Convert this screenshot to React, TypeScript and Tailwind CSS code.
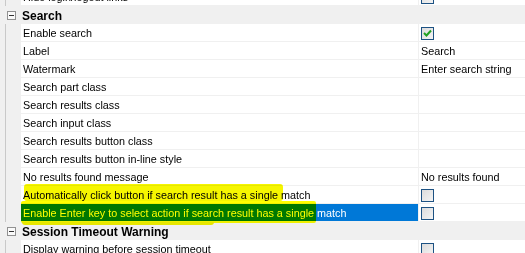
import React from "react";

type Row =
  | { kind: "group"; label: string }
  | { kind: "prop"; label: string; value?: string; check?: boolean | "on"; selected?: boolean };

const rows: Row[] = [
  { kind: "prop", label: "Hide login/logout links", check: false },
  { kind: "group", label: "Search" },
  { kind: "prop", label: "Enable search", check: "on" },
  { kind: "prop", label: "Label", value: "Search" },
  { kind: "prop", label: "Watermark", value: "Enter search string" },
  { kind: "prop", label: "Search part class" },
  { kind: "prop", label: "Search results class" },
  { kind: "prop", label: "Search input class" },
  { kind: "prop", label: "Search results button class" },
  { kind: "prop", label: "Search results button in-line style" },
  { kind: "prop", label: "No results found message", value: "No results found" },
  { kind: "prop", label: "Automatically click button if search result has a single match", check: false },
  {
    kind: "prop",
    label: "Enable Enter key to select action if search result has a single match",
    check: false,
    selected: true,
  },
  { kind: "group", label: "Session Timeout Warning" },
  { kind: "prop", label: "Display warning before session timeout", check: false },
];

function CheckBox({ checked }: { checked: boolean }) {
  return (
    <span className="flex h-[13px] w-[13px] items-center justify-center border border-[#1d5283] bg-gradient-to-br from-[#dcdcdc] to-[#f4f4f4]">
      {checked && (
        <svg width="9" height="8" viewBox="0 0 9 8">
          <path d="M1 4 L3.5 6.5 L8 1.5" fill="none" stroke="#21a121" strokeWidth="2" />
        </svg>
      )}
    </span>
  );
}

function Expander() {
  return (
    <span className="flex h-[9px] w-[9px] items-center justify-center border border-[#919191] bg-[#fafafa]">
      <span className="h-px w-[5px] bg-[#333]" />
    </span>
  );
}

export default function App() {
  return (
    <div
      className="relative h-[253px] w-[525px] overflow-hidden bg-white text-[10.8px] text-black"
      style={{ fontFamily: '"Liberation Sans", Arial, sans-serif' }}
    >
      <div className="-mt-[12px] flex flex-col">
        {rows.map((r, i) =>
          r.kind === "group" ? (
            <div key={i} className="flex h-[18px] items-center bg-[#f0f0f0]">
              <div className="flex w-[21px] items-center justify-end pr-[5px]">
                <Expander />
              </div>
              <span className="pl-px pt-[2px] text-[12px] font-bold">{r.label}</span>
            </div>
          ) : (
            <div key={i} className="flex h-[18px]">
              <div className="flex w-[21px] shrink-0 bg-[#f0f0f0]">
                <span className="ml-[5px] h-full w-px bg-[#c9c9c9]" />
              </div>
              <div
                className={
                  "flex w-[397px] items-center overflow-hidden whitespace-nowrap border-b border-[#f0f0f0] pl-[2px] pt-px " +
                  (r.selected ? "bg-[#0078d7] text-white" : "")
                }
              >
                {r.label}
              </div>
              <div className="flex flex-1 items-center whitespace-nowrap border-b border-l border-[#f0f0f0] pl-[2px] pt-px">
                {r.check !== undefined ? <CheckBox checked={r.check === "on"} /> : r.value}
              </div>
            </div>
          )
        )}
      </div>

      {/* highlighter marks */}
      <div className="pointer-events-none absolute left-[24px] top-[184px] h-[17px] w-[259px] rounded-[3px] bg-[#f6f600] mix-blend-multiply" />
      <div className="pointer-events-none absolute left-[21px] top-[201px] h-[22px] w-[295px] rounded-[2px] bg-[#ffff00] mix-blend-multiply" />
      <div className="pointer-events-none absolute left-[22px] top-[222px] h-[3px] w-[192px] rounded-b-[3px] bg-[#f6f600] mix-blend-multiply" />
    </div>
  );
}
